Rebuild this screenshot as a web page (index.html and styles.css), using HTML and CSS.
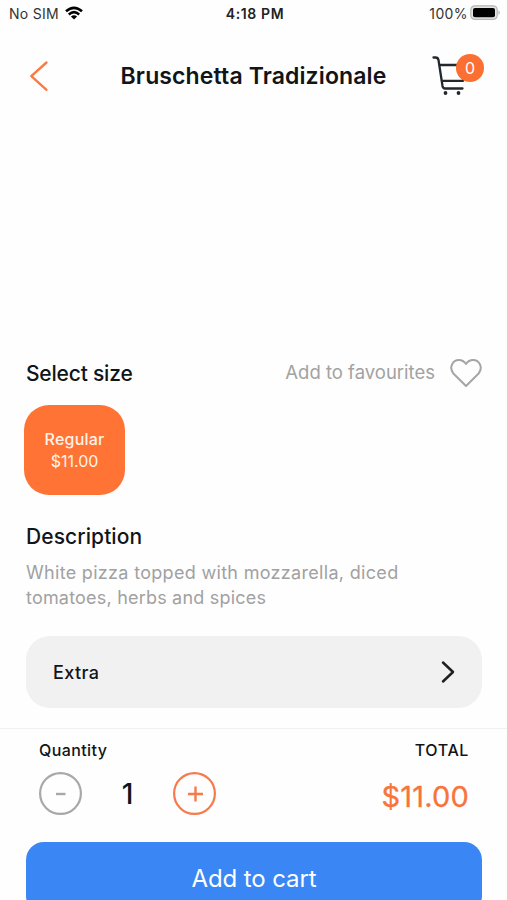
FILE: index.html
```html
<!DOCTYPE html>
<html lang="en">
<head>
<meta charset="utf-8">
<title>Bruschetta Tradizionale</title>
<link rel="stylesheet" href="styles.css">
</head>
<body>
<div class="screen">
  <div class="status">
    <div class="carrier"><span class="sim">No SIM</span>
      <svg class="wifi" width="18" height="14" viewBox="0 0 18 14" fill="none" stroke="#000" stroke-width="2.6"><path d="M1 5.300Q9-1.700 17 5.300"/><path d="M3.800 8.400Q9 4 14.200 8.400"/><path d="M9 13.500 5.900 10.400Q9 8 12.100 10.400Z" fill="#000" stroke="none"/></svg>
    </div>
    <span class="time">4:18 PM</span>
    <div class="power"><span class="percent">100%</span>
      <svg width="31" height="16" viewBox="0 0 31 16"><rect x=".8" y=".8" width="26.4" height="13.6" rx="4" fill="#e4e4e4" stroke="#b5b5b5" stroke-width="1.2"/><rect x="3" y="3" width="22" height="9.2" rx="2" fill="#000"/><path d="M28.500 5.200Q31 7.600 28.500 10Z" fill="#aaa"/></svg>
    </div>
  </div>
  <header class="header">
    <svg class="back" width="20" height="32" viewBox="0 0 20 32" fill="none" stroke="#fb7a42" stroke-width="2.4" stroke-linecap="round" stroke-linejoin="round"><path d="M17.500 2.500 2.300 16.200 17.500 29.800"/></svg>
    <h1 class="title">Bruschetta Tradizionale</h1>
    <div class="cart">
      <svg width="40" height="42" viewBox="0 0 40 42" fill="none" stroke="#22282c" stroke-width="2.3" stroke-linecap="round" stroke-linejoin="round"><path d="M1.500 2.500H3.500Q6 2.500 6.500 5L10.500 31Q11 33.500 13 33.500H30.500M7.500 10H34L31 25.800H9.500"/><circle cx="13.500" cy="38" r="1.900" fill="#22282c" stroke="none"/><circle cx="26.500" cy="38" r="1.900" fill="#22282c" stroke="none"/></svg>
      <span class="badge">0</span>
    </div>
  </header>
  <div class="photo"></div>
  <main class="details">
    <div class="size-row">
      <h2 class="heading select">Select size</h2>
      <div class="favourite"><span class="fav-text">Add to favourites</span>
        <svg width="32" height="30" viewBox="0 0 32 30" fill="none" stroke="#a5a5a5" stroke-width="2" stroke-linejoin="round"><path d="M16 28 3.600 15.800C-1.500 9.500 2.500 2 9 2C12 2 14.300 3.500 16 6C17.700 3.500 20 2 23 2C29.500 2 33.500 9.500 28.400 15.800Z"/></svg>
      </div>
    </div>
    <div class="option"><span class="option-name">Regular</span><span class="option-price">$11.00</span></div>
    <h2 class="heading desc-title">Description</h2>
    <p class="desc"><span class="line-a">White pizza topped with mozzarella, diced</span><br><span class="line-b">tomatoes, herbs and spices</span></p>
    <div class="extra"><span class="extra-text">Extra</span>
      <svg width="14" height="24" viewBox="0 0 14 24" fill="none" stroke="#1d2023" stroke-width="2.500" stroke-linecap="round" stroke-linejoin="round"><path d="M2 2.500 12 12 2 21.500"/></svg>
    </div>
  </main>
  <footer class="order">
    <div class="labels"><span class="quantity">Quantity</span><span class="total">TOTAL</span></div>
    <div class="amounts">
      <div class="stepper">
        <svg width="43" height="43" viewBox="0 0 43 43" fill="none" stroke="#a8a8a8" stroke-width="2.200"><circle cx="21.500" cy="21.500" r="20.400"/><path d="M17 22H26.500" stroke-width="2.400"/></svg>
        <span class="count">1</span>
        <svg width="43" height="43" viewBox="0 0 43 43" fill="none" stroke="#f8794a" stroke-width="2.200"><circle cx="21.500" cy="21.500" r="20.400"/><path d="M15 22H30M22.500 14.500V29.500" stroke-width="2.400"/></svg>
      </div>
      <span class="price">$11.00</span>
    </div>
    <div class="add"><span class="add-text">Add to cart</span></div>
  </footer>
</div>
</body>
</html>
```
FILE: styles.css
```css
* { box-sizing: border-box; }
body { margin: 0; background: #fff; color: #111518; font-family: Inter, "Liberation Sans", sans-serif; }
h1, h2, p { margin: 0; }
svg { display: block; flex: none; }
span { white-space: nowrap; }
.screen { height: 900px; overflow: hidden; background: #fefefe; display: flex; flex-direction: column; }
.status { height: 28px; flex: none; padding: 0 6px 2px 9px; display: grid; grid-template-columns: 1fr auto 1fr; align-items: center; font-size: 14px; color: #333; }
.carrier, .power { display: flex; align-items: center; gap: 6px; }
.sim { letter-spacing: .3px; }
.power { justify-content: flex-end; gap: 2px; }
.percent { letter-spacing: .4px; }
.time { font-weight: 600; color: #222; letter-spacing: .6px; }
.header { height: 96px; flex: none; padding: 0 23px 0 29px; display: flex; align-items: center; justify-content: space-between; }
.title { font-size: 23px; line-height: 30px; font-weight: 600; letter-spacing: .12px; white-space: nowrap; margin-left: 26px; }
.cart { position: relative; width: 52px; height: 42px; }
.badge { position: absolute; left: 24px; top: -1px; width: 28px; height: 28px; border-radius: 50%; background: #fb6f32; color: #fff; font-size: 16px; line-height: 28px; text-align: center; }
.photo { height: 228px; flex: none; }
.details { height: 376px; flex: none; padding: 0 25px 0 26px; }
.size-row { height: 42px; display: flex; align-items: center; justify-content: space-between; }
.heading { font-size: 21px; line-height: 28px; font-weight: 500; white-space: nowrap; }
.select { padding-top: 2px; letter-spacing: -.2px; }
.favourite { display: flex; align-items: center; gap: 15px; color: #a2a2a2; font-size: 18.5px; }
.fav-text { padding-bottom: 2px; }
.option { width: 101px; height: 90px; margin: 11px 0 0 -2px; border-radius: 25px; background: #ff7434; color: #fff3e9; display: flex; flex-direction: column; align-items: center; justify-content: center; font-size: 16px; line-height: 22px; padding-bottom: 1px; }
.option-name { font-weight: 500; letter-spacing: .2px; }
.desc-title { margin-top: 28px; letter-spacing: .08px; }
.desc { margin-top: 9px; font-size: 18px; line-height: 25px; color: #a1a1a1; }
.line-a { letter-spacing: .31px; }
.line-b { letter-spacing: .2px; }
.extra { height: 72px; margin-top: 26px; padding: 0 27px; border-radius: 24px; background: #f1f1f1; display: flex; align-items: center; justify-content: space-between; font-size: 18px; font-weight: 500; letter-spacing: .4px; }
.order { border-top: 1px solid #f1f1f1; padding: 0 25px 0 26px; }
.labels { height: 43px; padding: 0 13px 2px; display: flex; align-items: center; justify-content: space-between; font-size: 16px; font-weight: 500; }
.quantity { letter-spacing: .4px; }
.total { letter-spacing: .6px; }
.amounts { height: 43px; padding: 0 13px; display: flex; align-items: center; justify-content: space-between; }
.stepper { display: flex; align-items: center; }
.count { width: 91px; text-align: center; font-size: 28px; font-weight: 500; }
.price { padding-top: 5px; font-size: 29px; letter-spacing: .2px; color: #f7743b; -webkit-text-stroke: .3px #f7743b; }
.add { height: 72px; margin-top: 27px; border-radius: 18px; background: #3a86f5; color: #fff; display: flex; align-items: center; justify-content: center; font-size: 24px; letter-spacing: -.1px; }
```
